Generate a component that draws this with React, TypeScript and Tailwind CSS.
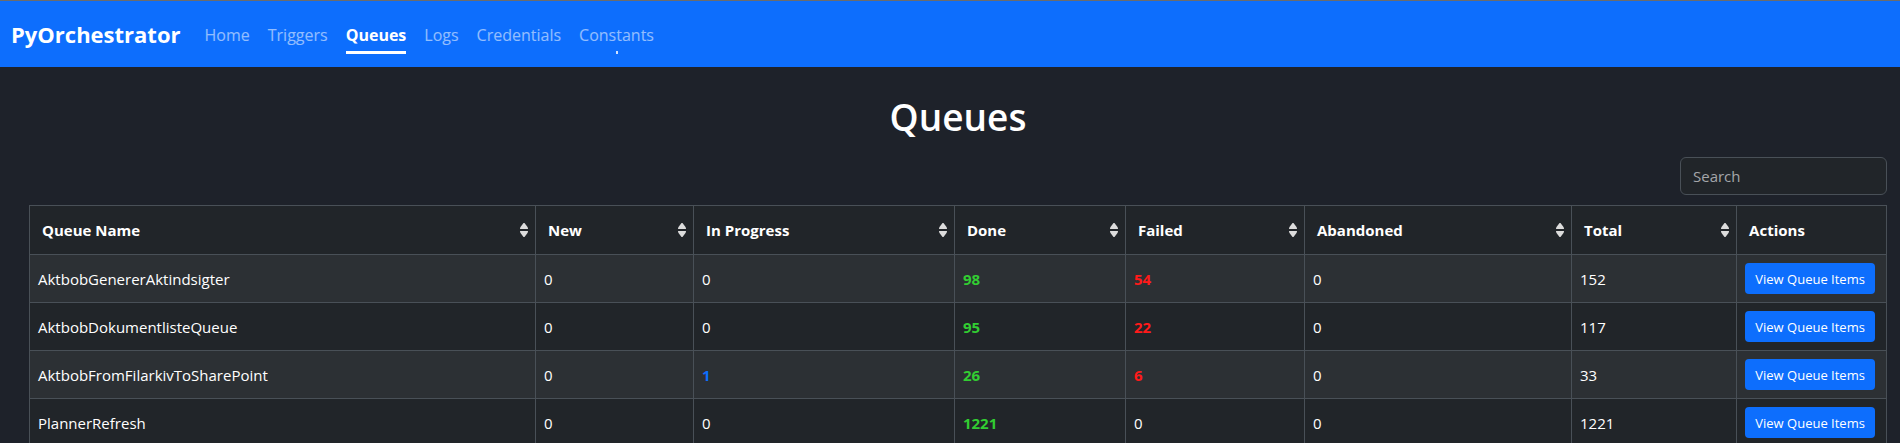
type Queue = {
  name: string;
  fresh: number;
  progress: number;
  done: number;
  failed: number;
  abandoned: number;
  total: number;
};

const queues: Queue[] = [
  { name: "AktbobGenererAktindsigter", fresh: 0, progress: 0, done: 98, failed: 54, abandoned: 0, total: 152 },
  { name: "AktbobDokumentlisteQueue", fresh: 0, progress: 0, done: 95, failed: 22, abandoned: 0, total: 117 },
  { name: "AktbobFromFilarkivToSharePoint", fresh: 0, progress: 1, done: 26, failed: 6, abandoned: 0, total: 33 },
  { name: "PlannerRefresh", fresh: 0, progress: 0, done: 1221, failed: 0, abandoned: 0, total: 1221 },
];

const columns = [
  { label: "Queue Name", width: "w-[27.25%]", sortable: true },
  { label: "New", width: "w-[8.51%]", sortable: true },
  { label: "In Progress", width: "w-[14.05%]", sortable: true },
  { label: "Done", width: "w-[9.21%]", sortable: true },
  { label: "Failed", width: "w-[9.64%]", sortable: true },
  { label: "Abandoned", width: "w-[14.38%]", sortable: true },
  { label: "Total", width: "w-[8.89%]", sortable: true },
  { label: "Actions", width: "w-[8.07%]", sortable: false },
];

const links = ["Home", "Triggers", "Queues", "Logs", "Credentials", "Constants"];

function NavLink({ label }: { label: string }) {
  const active = label === "Queues";
  return (
    <a
      href={"#" + label.toLowerCase()}
      aria-current={active ? "page" : undefined}
      className={
        active
          ? "relative block h-[31px] text-[16px] leading-6 font-bold text-white"
          : "relative block h-[31px] text-[16px] leading-6 text-white/55"
      }
    >
      {label}
      {active && <span className="absolute inset-x-0 bottom-0 h-[3px] bg-white" />}
      {label === "Constants" && (
        <span className="absolute bottom-0 left-1/2 h-[3px] w-[2px] -translate-x-1/2 bg-white/80" />
      )}
    </a>
  );
}

function SortIcon() {
  return (
    <svg viewBox="0 0 8 14" className="h-[14px] w-2 shrink-0 fill-[#dcdcdc]" aria-hidden="true">
      <path d="M3.5 0H4.5L7.5 4Q8 5 8 6H0Q0 5 .5 4Z" />
      <path d="M0 8H8Q8 9 7.5 10L4.5 14H3.5L.5 10Q0 9 0 8Z" />
    </svg>
  );
}

function Count({ value, tone }: { value: number; tone?: string }) {
  return (
    <td className="border border-[#495057] px-2">
      {value > 0 && tone ? <span className={tone}>{value}</span> : value}
    </td>
  );
}

export default function App() {
  return (
    <div className="min-h-screen bg-[#1e222a] font-['Open_Sans','Noto_Sans',sans-serif] text-white">
      <nav className="flex h-[67px] items-center border-t border-[#6c6c6c] bg-[#0d6efd] px-[11px]">
        <a href="#top" className="mr-6 text-[22px] leading-8 font-bold">
          PyOrchestrator
        </a>
        <div className="flex gap-[18px] pt-[9px]">
          {links.map((label) => (
            <NavLink key={label} label={label} />
          ))}
        </div>
      </nav>

      <main className="pr-[13px] pl-[29px]">
        <h1 className="pt-[26px] text-center text-[37px] leading-12 font-semibold">Queues</h1>
        <div className="flex justify-end pt-4 pb-[10px]">
          <input
            type="search"
            aria-label="Search"
            placeholder="Search"
            className="h-[38px] w-[207px] rounded-md border border-[#495057] bg-[#212529] px-3 text-[15px] text-white placeholder:text-[#a4a6a9]"
          />
        </div>
        <table className="w-full table-fixed border-collapse border border-[#495057] bg-[#212529] text-[15px] leading-6">
          <colgroup>
            {columns.map((c) => (
              <col key={c.label} className={c.width} />
            ))}
          </colgroup>
          <thead>
            <tr className="h-[49px]">
              {columns.map((c) => (
                <th key={c.label} scope="col" className="border border-[#495057] pr-[7px] pl-3 text-left font-bold">
                  {c.sortable ? (
                    <button type="button" className="flex w-full items-center justify-between text-left">
                      {c.label}
                      <SortIcon />
                    </button>
                  ) : (
                    c.label
                  )}
                </th>
              ))}
            </tr>
          </thead>
          <tbody>
            {queues.map((q) => (
              <tr key={q.name} className="h-12 odd:bg-[#2c3034]">
                <td className="border border-[#495057] px-2">{q.name}</td>
                <Count value={q.fresh} />
                <Count value={q.progress} tone="font-bold text-[#0d6efd]" />
                <Count value={q.done} tone="font-bold text-[#32cd32]" />
                <Count value={q.failed} tone="font-bold text-[#ff1a1a]" />
                <Count value={q.abandoned} />
                <Count value={q.total} />
                <td className="border border-[#495057] px-2">
                  <button
                    type="button"
                    className="block h-[31px] w-[130px] rounded bg-[#0d6efd] text-[13px] leading-5 whitespace-nowrap"
                  >
                    View Queue Items
                  </button>
                </td>
              </tr>
            ))}
          </tbody>
        </table>
      </main>
    </div>
  );
}
